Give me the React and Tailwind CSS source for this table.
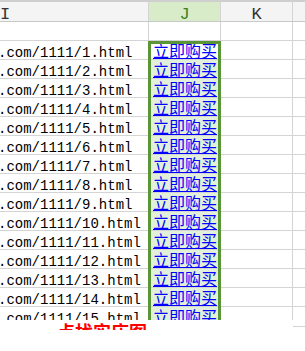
const rows = Array.from({ length: 16 }, (_, i) => i + 1);

const mono = { fontFamily: '"Liberation Mono", "Noto Sans CJK SC", monospace' };
const cjk = { fontFamily: '"Noto Sans CJK SC", sans-serif' };

export default function App() {
  return (
    <div className="w-[305px] h-[351px] bg-white overflow-hidden">
      <div className="relative h-[320px] overflow-hidden">
        <div className="h-[2px] bg-[#cfcfcf]" />

        {/* column header */}
        <div className="flex h-[20px] border-b border-[#c8c8c8] bg-[#f4f4f4] text-[17px] leading-[20px] text-[#333]" style={mono}>
          <div className="w-[149px] shrink-0 border-r border-[#d4d4d4] pt-[3px]">I</div>
          <div className="w-[72px] shrink-0 border-r border-[#d4d4d4] bg-[#d9ecc9] pt-[3px] text-center text-[#3d7f24]">J</div>
          <div className="w-[72px] shrink-0 border-r border-[#d4d4d4] pt-[3px] text-center">K</div>
          <div className="flex-1" />
        </div>

        {/* empty row */}
        <div className="flex h-[19px] border-b border-[#d4d4d4]">
          <div className="w-[149px] shrink-0 border-r border-[#d4d4d4]" />
          <div className="w-[72px] shrink-0 border-r border-[#d4d4d4]" />
          <div className="w-[72px] shrink-0 border-r border-[#d4d4d4]" />
          <div className="flex-1" />
        </div>

        {rows.map((n) => (
          <div key={n} className="flex h-[19px] border-b border-[#d4d4d4]">
            <div className="w-[149px] shrink-0 overflow-hidden whitespace-nowrap border-r border-[#d4d4d4] pt-[5px] text-[14px] leading-[14px] text-black" style={mono}>
              <span className="-ml-[2px]">.com/1111/{n}.html</span>
            </div>
            <div className={`w-[72px] shrink-0 overflow-hidden whitespace-nowrap border-r border-[#d4d4d4] pl-[4px] pt-[1px] text-[16px] leading-[16px] ${n === 1 ? 'bg-white' : 'bg-[#e2f0d9]'}`} style={cjk}>
              <a href="#" className="text-[#0000ff] underline">立即购买</a>
            </div>
            <div className="w-[72px] shrink-0 border-r border-[#d4d4d4]" />
            <div className="flex-1" />
          </div>
        ))}

        {/* selection */}
        <div className="absolute left-[148px] top-[41px] h-[400px] w-[73px] border-[3px] border-[#5a9637]" />
      </div>

      <div className="flex h-[10px] overflow-hidden">
        <div className="pl-[57px] pt-[2px] text-[18px] font-bold leading-[18px] text-[#ff0000] whitespace-nowrap" style={cjk}>
          点找实店图
        </div>
        <div className="flex-1" />
        <div className="mt-[6px] h-px w-[12px] bg-[#d4d4d4]" />
      </div>
    </div>
  );
}
